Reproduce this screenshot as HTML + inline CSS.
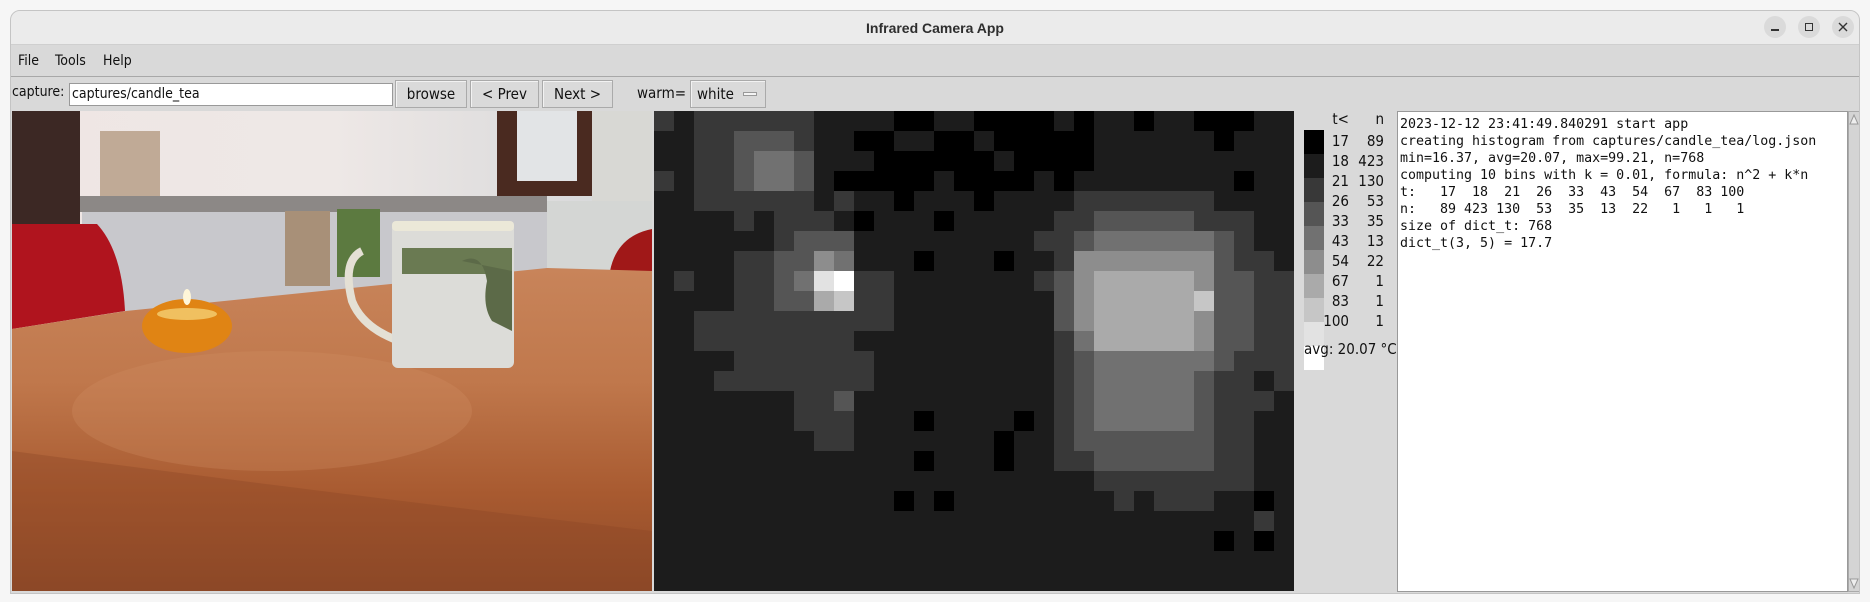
<!DOCTYPE html>
<html><head><meta charset="utf-8">
<style>
*{margin:0;padding:0;box-sizing:border-box}
body{width:1870px;height:602px;background:#f6f6f6;position:relative;overflow:hidden;font-family:"DejaVu Sans Condensed","DejaVu Sans","Liberation Sans",sans-serif;font-stretch:condensed;font-size:14px;color:#111}
.win{position:absolute;left:10px;top:10px;width:1850px;height:584px;background:#d9d9d9;border-radius:10px 10px 0 0;border:1px solid #c4c4c4;overflow:hidden}
.title{position:absolute;left:0;top:0;width:100%;height:34px;background:#ebebeb;border-bottom:1px solid #cfcfcf;text-align:center;line-height:34px;font-family:"Liberation Sans",sans-serif;font-weight:bold;font-size:14px;color:#2e2e2e;font-stretch:normal}
.ctl{position:absolute;top:5px;width:22px;height:22px;border-radius:50%;background:#dadada}
.menu{position:absolute;left:0;top:35px;width:100%;height:31px;border-bottom:1px solid #a8a8a8;background:#d9d9d9}
.menu span{position:absolute;top:7px}
.abs{position:absolute}
.btn{position:absolute;top:69px;height:28px;border:1px solid #aaa;background:#dadada;box-shadow:inset 1px 1px 0 #f2f2f2;text-align:center;line-height:26px;font-size:15px}
.mono{font-family:"DejaVu Sans Mono","Liberation Mono",monospace;font-size:13.3px;line-height:17px;white-space:pre;font-stretch:normal}
.lr{display:flex;justify-content:space-between}
.lr span:first-child{width:33px;text-align:right}
</style></head><body>
<div class="win">
 <div class="title">Infrared Camera App
  <div class="ctl" style="left:1753px"><div style="position:absolute;left:7px;top:13px;width:8px;height:1.5px;background:#333"></div></div>
  <div class="ctl" style="left:1787px"><div style="position:absolute;left:7px;top:7px;width:8px;height:8px;border:1.3px solid #333"></div></div>
  <div class="ctl" style="left:1821px"><svg width="22" height="22" style="position:absolute;left:0;top:0"><path d="M7 7L15 15M15 7L7 15" stroke="#333" stroke-width="1.4"/></svg></div>
 </div>
 <div class="menu"><span style="left:7px">File</span><span style="left:44px">Tools</span><span style="left:92px">Help</span></div>
 <div class="abs" style="left:1px;top:73px;font-size:14px">capture:</div>
 <div class="abs" style="left:58px;top:72px;width:324px;height:23px;background:#fff;border:1px solid #999;padding-left:2px;line-height:21px;font-size:14px">captures/candle_tea</div>
 <div class="btn" style="left:384px;width:72px">browse</div>
 <div class="btn" style="left:459px;width:69px">&lt; Prev</div>
 <div class="btn" style="left:531px;width:71px">Next &gt;</div>
 <div class="abs" style="left:626px;top:73px;font-size:15px">warm=</div>
 <div class="btn" style="left:679px;width:76px;text-align:left;padding-left:6px">white<div style="position:absolute;left:52px;top:11px;width:14px;height:4px;background:#f4f4f4;border:1px solid #999"></div></div>

 <!-- photo -->
 <svg class="abs" style="left:1px;top:100px" width="640" height="480" viewBox="0 0 640 480">
  <defs>
   <linearGradient id="wall" x1="0" y1="0" x2="1" y2="0"><stop offset="0" stop-color="#efe6e4"/><stop offset="0.5" stop-color="#eee8e6"/><stop offset="1" stop-color="#d4d6d8"/></linearGradient>
   <linearGradient id="tab" x1="0" y1="0" x2="0" y2="1"><stop offset="0" stop-color="#c8845a"/><stop offset="0.35" stop-color="#c0784c"/><stop offset="0.7" stop-color="#a85a30"/><stop offset="1" stop-color="#8e4a28"/></linearGradient>
  </defs>
  <rect width="640" height="480" fill="url(#wall)"/>
  <rect x="0" y="0" width="68" height="120" fill="#3c2824"/>
  <rect x="485" y="0" width="95" height="85" fill="#4a2a20"/>
  <rect x="505" y="0" width="60" height="70" fill="#e2e4e6"/>
  <rect x="580" y="0" width="60" height="160" fill="#d8d8d4"/>
  <rect x="88" y="20" width="60" height="65" fill="#c0aa96"/>
  <rect x="68" y="85" width="467" height="16" fill="#8c8886"/>
  <rect x="70" y="101" width="465" height="100" fill="#c8c8cc"/>
  <rect x="535" y="90" width="105" height="70" fill="#d4d6d4"/>
  <rect x="273" y="100" width="45" height="75" fill="#a89078"/>
  <rect x="325" y="98" width="43" height="68" fill="#5c7a40"/>
  <path d="M0 113 L85 113 Q110 140 113 200 L0 218Z" fill="#b0141e"/>
  <path d="M598 160 Q605 125 640 118 L640 160Z" fill="#a01818"/>
  <path d="M0 218 L114 200 L535 157 L640 160 L640 480 L0 480Z" fill="url(#tab)"/>
  <ellipse cx="260" cy="300" rx="200" ry="60" fill="#d08e62" opacity="0.3"/>
  <path d="M0 340 Q300 380 640 420 L640 480 L0 480Z" fill="#8a4624" opacity="0.35"/>
  <ellipse cx="175" cy="215" rx="45" ry="27" fill="#e08414"/>
  <ellipse cx="175" cy="203" rx="30" ry="6" fill="#f0c060"/>
  <ellipse cx="175" cy="186" rx="4" ry="8" fill="#fff6d8"/>
  <path d="M350 140 Q330 150 340 190 Q350 215 382 228" stroke="#e4e0d4" stroke-width="8" fill="none"/>
  <rect x="380" y="112" width="122" height="145" rx="6" fill="#dcdcd8"/>
  <rect x="380" y="110" width="122" height="10" rx="4" fill="#ebe8d8"/>
  <rect x="390" y="137" width="110" height="26" fill="#6a7a52"/>
  <path d="M450 150 Q470 140 475 170 Q470 195 480 210 L500 220 L500 160Z" fill="#5c6a48"/>
 </svg>

 <!-- thermal -->
 <svg class="abs" style="left:643px;top:100px" width="640" height="480" viewBox="0 0 640 480" shape-rendering="crispEdges">
  <rect width="640" height="480" fill="#1c1c1c"/>
  <g fill="#383838">
   <rect x="0" y="0" width="20" height="20"/><rect x="40" y="0" width="120" height="20"/>
   <rect x="40" y="20" width="40" height="40"/><rect x="140" y="20" width="20" height="20"/>
   <rect x="0" y="60" width="20" height="20"/><rect x="40" y="60" width="40" height="20"/>
   <rect x="40" y="80" width="120" height="20"/><rect x="180" y="80" width="20" height="20"/><rect x="420" y="80" width="140" height="20"/>
   <rect x="80" y="100" width="20" height="20"/><rect x="120" y="100" width="60" height="20"/><rect x="400" y="100" width="40" height="20"/><rect x="540" y="100" width="60" height="20"/>
   <rect x="120" y="120" width="20" height="20"/><rect x="380" y="120" width="40" height="20"/><rect x="580" y="120" width="20" height="20"/>
   <rect x="80" y="140" width="40" height="20"/><rect x="400" y="140" width="20" height="20"/><rect x="580" y="140" width="40" height="20"/>
   <rect x="20" y="160" width="20" height="20"/><rect x="80" y="160" width="40" height="20"/><rect x="200" y="160" width="40" height="20"/><rect x="380" y="160" width="20" height="20"/><rect x="600" y="160" width="40" height="20"/>
   <rect x="80" y="180" width="40" height="20"/><rect x="200" y="180" width="40" height="20"/><rect x="600" y="180" width="40" height="20"/>
   <rect x="40" y="200" width="200" height="20"/><rect x="600" y="200" width="40" height="20"/>
   <rect x="40" y="220" width="160" height="20"/><rect x="400" y="220" width="20" height="20"/><rect x="600" y="220" width="40" height="20"/>
   <rect x="80" y="240" width="140" height="20"/><rect x="400" y="240" width="20" height="20"/><rect x="580" y="240" width="60" height="20"/>
   <rect x="60" y="260" width="160" height="20"/><rect x="400" y="260" width="20" height="20"/><rect x="560" y="260" width="40" height="20"/><rect x="620" y="260" width="20" height="20"/>
   <rect x="140" y="280" width="40" height="20"/><rect x="400" y="280" width="20" height="20"/><rect x="560" y="280" width="60" height="20"/>
   <rect x="140" y="300" width="60" height="20"/><rect x="400" y="300" width="20" height="20"/><rect x="560" y="300" width="40" height="20"/>
   <rect x="160" y="320" width="40" height="20"/><rect x="400" y="320" width="20" height="20"/><rect x="560" y="320" width="40" height="20"/>
   <rect x="400" y="340" width="40" height="20"/><rect x="560" y="340" width="40" height="20"/>
   <rect x="440" y="360" width="160" height="20"/>
   <rect x="460" y="380" width="20" height="20"/><rect x="500" y="380" width="60" height="20"/>
   <rect x="600" y="400" width="20" height="20"/>
  </g>
  <g fill="#555555">
   <rect x="80" y="20" width="60" height="20"/><rect x="80" y="40" width="20" height="40"/><rect x="140" y="40" width="20" height="40"/>
   <rect x="440" y="100" width="100" height="20"/><rect x="140" y="120" width="60" height="20"/><rect x="420" y="120" width="20" height="20"/><rect x="560" y="120" width="20" height="20"/>
   <rect x="120" y="140" width="40" height="20"/><rect x="560" y="140" width="20" height="20"/>
   <rect x="120" y="160" width="20" height="20"/><rect x="400" y="160" width="20" height="20"/><rect x="560" y="160" width="40" height="20"/>
   <rect x="120" y="180" width="40" height="20"/><rect x="400" y="180" width="20" height="20"/><rect x="560" y="180" width="40" height="20"/>
   <rect x="400" y="200" width="20" height="20"/><rect x="560" y="200" width="40" height="20"/><rect x="560" y="220" width="40" height="20"/>
   <rect x="420" y="240" width="20" height="20"/><rect x="560" y="240" width="20" height="20"/>
   <rect x="420" y="260" width="20" height="20"/><rect x="540" y="260" width="20" height="20"/>
   <rect x="180" y="280" width="20" height="20"/><rect x="420" y="280" width="20" height="20"/><rect x="540" y="280" width="20" height="20"/>
   <rect x="420" y="300" width="20" height="20"/><rect x="540" y="300" width="20" height="20"/>
   <rect x="420" y="320" width="140" height="20"/><rect x="440" y="340" width="120" height="20"/>
  </g>
  <g fill="#717171">
   <rect x="100" y="40" width="40" height="40"/><rect x="440" y="120" width="120" height="20"/><rect x="180" y="140" width="20" height="20"/><rect x="140" y="160" width="20" height="20"/>
   <rect x="420" y="220" width="20" height="20"/><rect x="440" y="240" width="120" height="20"/><rect x="440" y="260" width="100" height="60"/>
  </g>
  <g fill="#8d8d8d">
   <rect x="160" y="140" width="20" height="20"/><rect x="420" y="140" width="140" height="20"/><rect x="420" y="160" width="20" height="60"/><rect x="540" y="160" width="20" height="20"/><rect x="540" y="200" width="20" height="40"/>
  </g>
  <g fill="#aaaaaa"><rect x="440" y="160" width="100" height="80"/><rect x="160" y="180" width="20" height="20"/></g>
  <rect x="180" y="180" width="20" height="20" fill="#c6c6c6"/><rect x="540" y="180" width="20" height="20" fill="#c6c6c6"/>
  <rect x="160" y="160" width="20" height="20" fill="#e2e2e2"/><rect x="180" y="160" width="20" height="20" fill="#ffffff"/>
  <g fill="#000">
   <rect x="240" y="0" width="40" height="20"/><rect x="320" y="0" width="80" height="20"/><rect x="420" y="0" width="20" height="20"/><rect x="480" y="0" width="20" height="20"/><rect x="540" y="0" width="60" height="20"/>
   <rect x="200" y="20" width="40" height="20"/><rect x="280" y="20" width="40" height="20"/><rect x="340" y="20" width="100" height="20"/><rect x="560" y="20" width="20" height="20"/>
   <rect x="220" y="40" width="120" height="20"/><rect x="360" y="40" width="80" height="20"/>
   <rect x="180" y="60" width="100" height="20"/><rect x="300" y="60" width="80" height="20"/><rect x="400" y="60" width="20" height="20"/><rect x="580" y="60" width="20" height="20"/>
   <rect x="240" y="80" width="20" height="20"/><rect x="320" y="80" width="20" height="20"/>
   <rect x="200" y="100" width="20" height="20"/><rect x="280" y="100" width="20" height="20"/>
   <rect x="260" y="140" width="20" height="20"/><rect x="340" y="140" width="20" height="20"/>
   <rect x="260" y="300" width="20" height="20"/><rect x="360" y="300" width="20" height="20"/><rect x="340" y="320" width="20" height="40"/>
   <rect x="260" y="340" width="20" height="20"/>
   <rect x="240" y="380" width="20" height="20"/><rect x="280" y="380" width="20" height="20"/><rect x="600" y="380" width="20" height="20"/>
   <rect x="560" y="420" width="20" height="20"/><rect x="600" y="420" width="20" height="20"/>
  </g>
 </svg>

 <!-- legend -->
 <div class="abs" style="left:1293px;top:119px;width:20px;height:240px;background:linear-gradient(#000 0 24px,#1c1c1c 24px 48px,#383838 48px 72px,#555 72px 96px,#717171 96px 120px,#8d8d8d 120px 144px,#aaa 144px 168px,#c6c6c6 168px 192px,#e2e2e2 192px 216px,#fff 216px 240px)"></div>
 <div class="abs" style="left:1305px;top:98px;width:68px;line-height:20px;font-size:15px">
  <div class="lr"><span>t&lt;</span><span>n</span></div>
 </div>
 <div class="abs" style="left:1305px;top:120px;width:68px;font-size:15px;line-height:20px">
  <div class="lr"><span>17</span><span>89</span></div>
  <div class="lr"><span>18</span><span>423</span></div>
  <div class="lr"><span>21</span><span>130</span></div>
  <div class="lr"><span>26</span><span>53</span></div>
  <div class="lr"><span>33</span><span>35</span></div>
  <div class="lr"><span>43</span><span>13</span></div>
  <div class="lr"><span>54</span><span>22</span></div>
  <div class="lr"><span>67</span><span>1</span></div>
  <div class="lr"><span>83</span><span>1</span></div>
  <div class="lr"><span>100</span><span>1</span></div>
 </div>
 <div class="abs" style="left:1293px;top:329px;font-size:15px">avg: 20.07 °C</div>

 <!-- log -->
 <div class="abs mono" style="left:1386px;top:100px;width:451px;height:481px;background:#fff;border:1px solid #999;padding:4px 0 0 2px">2023-12-12 23:41:49.840291 start app
creating histogram from captures/candle_tea/log.json
min=16.37, avg=20.07, max=99.21, n=768
computing 10 bins with k = 0.01, formula: n^2 + k*n
t:   17  18  21  26  33  43  54  67  83 100
n:   89 423 130  53  35  13  22   1   1   1
size of dict_t: 768
dict_t(3, 5) = 17.7</div>
 <div class="abs" style="left:1837px;top:100px;width:12px;height:481px;background:#d4d4d4;border:1px solid #aaa">
  <svg width="11" height="14" style="position:absolute;top:0;left:0"><path d="M1 12L5 3L9 12Z" fill="#eee" stroke="#999"/></svg>
  <svg width="11" height="14" style="position:absolute;bottom:0;left:0"><path d="M1 2L5 11L9 2Z" fill="#eee" stroke="#999"/></svg>
 </div>
</div>
</body></html>
